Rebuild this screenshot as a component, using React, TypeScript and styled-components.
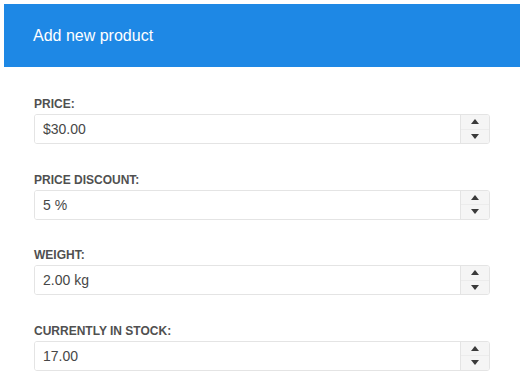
import React from "react";
import styled, { createGlobalStyle } from "styled-components";

const GlobalStyle = createGlobalStyle`
  body {
    margin: 4px 3px 0 4px;
    background: #fff;
    font-family: "Liberation Sans", Arial, sans-serif;
  }
`;

const Header = styled.div`
  height: 63px;
  background: #1e88e5;
  color: #fff;
  font-size: 16px;
  display: flex;
  align-items: center;
  padding: 0 29px;
  box-sizing: border-box;
`;

const Body = styled.div`
  padding: 30px 30px 0;
`;

const Field = styled.div`
  margin-bottom: 28.5px;
`;

const Label = styled.label`
  display: block;
  font-size: 12px;
  line-height: 15px;
  font-weight: bold;
  color: #505050;
  margin-bottom: 2px;
  text-transform: uppercase;
`;

const NumericBox = styled.div`
  display: flex;
  height: 30px;
  box-sizing: border-box;
  border: 1px solid #e4e4e4;
  border-radius: 3px;
  overflow: hidden;
`;

const Input = styled.input`
  flex: 1;
  min-width: 0;
  border: none;
  outline: none;
  padding: 0 8px;
  font-family: inherit;
  font-size: 14px;
  color: #474747;
  background: #fff;
`;

const Spinner = styled.div`
  width: 28px;
  display: flex;
  flex-direction: column;
  border-left: 1px solid #e4e4e4;
  background: #f5f5f5;
`;

const SpinButton = styled.span<{ $down?: boolean }>`
  flex: 1;
  display: flex;
  align-items: center;
  justify-content: center;
  border-top: ${(p) => (p.$down ? "1px solid #ececec" : "none")};

  &::after {
    content: "";
    width: 0;
    height: 0;
    border-left: 4px solid transparent;
    border-right: 4px solid transparent;
    ${(p) =>
      p.$down ? "border-top: 5px solid #3a3a3a;" : "border-bottom: 5px solid #3a3a3a;"}
  }
`;

const fields = [
  { label: "Price:", value: "$30.00" },
  { label: "Price discount:", value: "5 %" },
  { label: "Weight:", value: "2.00 kg" },
  { label: "Currently in stock:", value: "17.00" },
];

export default function App() {
  return (
    <>
      <GlobalStyle />
      <Header>Add new product</Header>
      <Body>
        {fields.map((f) => (
          <Field key={f.label}>
            <Label>{f.label}</Label>
            <NumericBox>
              <Input type="text" defaultValue={f.value} />
              <Spinner>
                <SpinButton />
                <SpinButton $down />
              </Spinner>
            </NumericBox>
          </Field>
        ))}
      </Body>
    </>
  );
}
